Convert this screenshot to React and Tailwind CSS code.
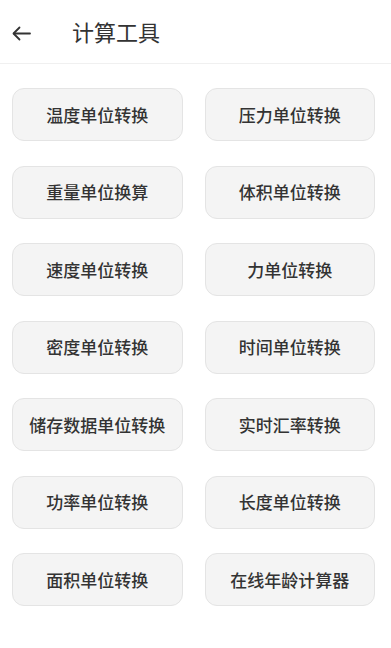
import React from "react";

const items = [
  "温度单位转换",
  "压力单位转换",
  "重量单位换算",
  "体积单位转换",
  "速度单位转换",
  "力单位转换",
  "密度单位转换",
  "时间单位转换",
  "储存数据单位转换",
  "实时汇率转换",
  "功率单位转换",
  "长度单位转换",
  "面积单位转换",
  "在线年龄计算器",
];

export default function App() {
  return (
    <div
      className="w-[391px] h-[648px] bg-white overflow-hidden"
      style={{ fontFamily: '"Noto Sans CJK SC", "Noto Sans", sans-serif' }}
    >
      <div className="h-[64px] flex items-center border-b border-[#f0f0f0]">
        <div className="w-[72px] pl-[12px] flex items-center mt-[3px]">
          <svg width="19" height="15" viewBox="0 0 19 15" fill="none" stroke="#333" strokeWidth="1.8" strokeLinecap="round" strokeLinejoin="round">
            <path d="M18 7.5H2" />
            <path d="M7.5 1.5L1.5 7.5L7.5 13.5" />
          </svg>
        </div>
        <div className="text-[22px] leading-none text-[#333] -mt-[1px]">计算工具</div>
      </div>
      <div className="pl-3 pr-4 pt-6 grid grid-cols-2 gap-x-[22px] gap-y-[24.5px]">
        {items.map((t) => (
          <div
            key={t}
            className="h-[53px] flex items-center justify-center rounded-[12px] bg-[#f4f4f4] border border-[#e4e4e4] text-[17px] font-medium text-[#333] whitespace-nowrap"
          >
            {t}
          </div>
        ))}
      </div>
    </div>
  );
}
